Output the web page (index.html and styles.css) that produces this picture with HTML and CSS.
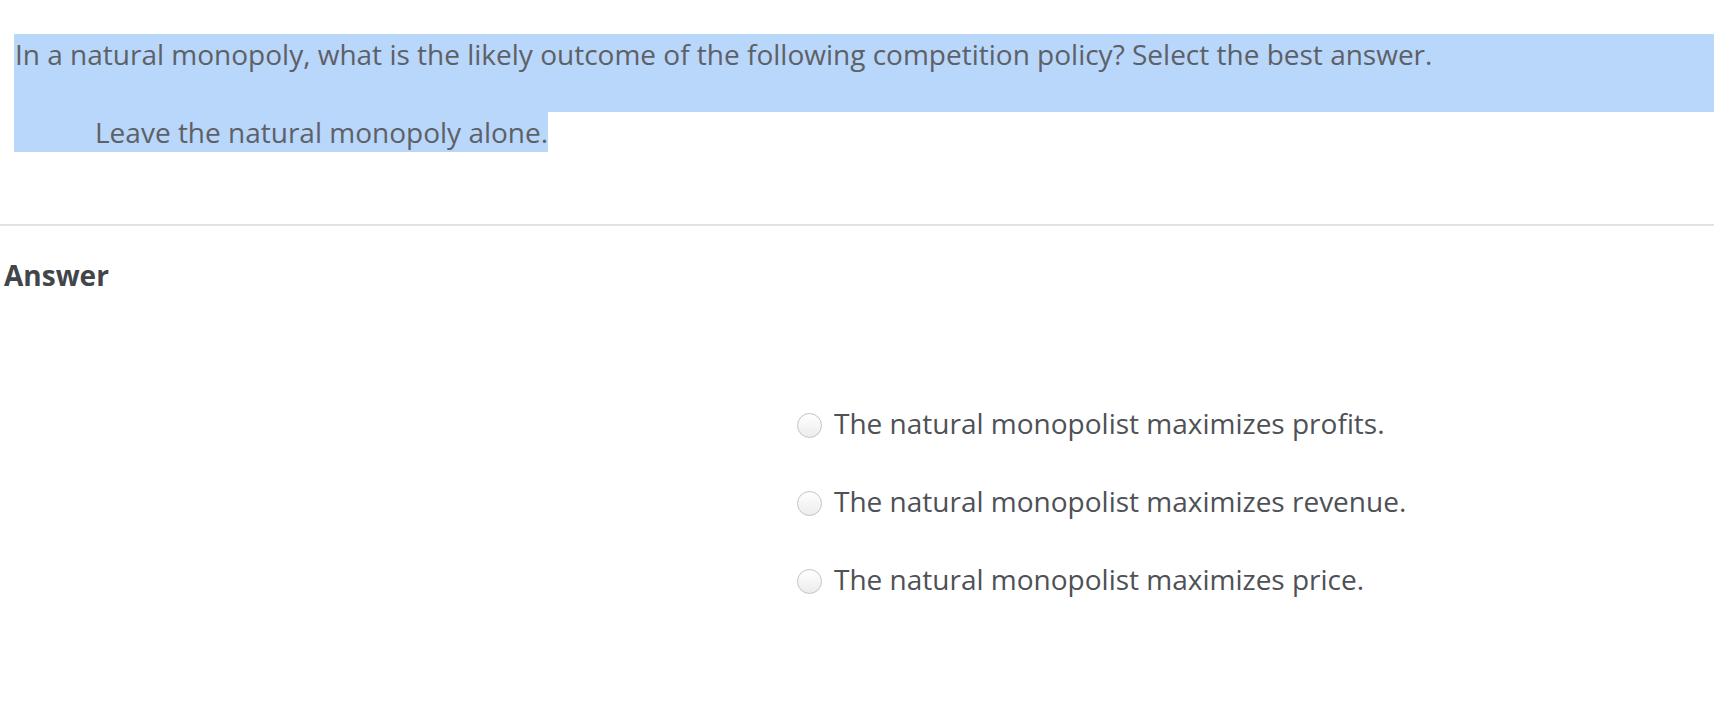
FILE: index.html
```html
<!DOCTYPE html>
<html lang="en">
<head>
<meta charset="utf-8">
<title>Question</title>
<link rel="stylesheet" href="styles.css">
</head>
<body>
<div class="page">
  <div class="question">
    <div class="q-line q-first"><span class="q-text">In a natural monopoly, what is the likely outcome of the following competition policy? Select the best answer.</span></div>
    <div class="q-blank"></div>
    <div class="q-line"><span class="q-policy">Leave the natural monopoly alone.</span></div>
  </div>
  <div class="divider"></div>
  <h2 class="answer-title">Answer</h2>
  <div class="options">
    <label class="option"><span class="radio"></span><span class="option-text">The natural monopolist maximizes profits.</span></label>
    <label class="option"><span class="radio"></span><span class="option-text">The natural monopolist maximizes revenue.</span></label>
    <label class="option"><span class="radio"></span><span class="option-text">The natural monopolist maximizes price.</span></label>
  </div>
</div>
</body>
</html>
```

FILE: styles.css
```css
html, body {
  margin: 0;
  padding: 0;
  background: #ffffff;
}
body {
  font-family: "Open Sans", "Noto Sans", "Liberation Sans", sans-serif;
  color: #5d6166;
}
.page {
  display: flex;
  flex-direction: column;
}
.question {
  padding-top: 34px;
  font-size: 28px;
  line-height: 40px;
}
.q-line {
  height: 40px;
  padding-left: 14px;
  display: flex;
}
.q-first {
  margin-left: 14px;
  padding-left: 1px;
  background: #b9d6fb;
}
.q-blank {
  height: 38px;
  margin-left: 14px;
  background: #b9d6fb;
}
.q-policy {
  display: inline-block;
  padding-left: 81px;
  padding-right: 0;
  background: #b9d6fb;
}
.divider {
  margin-top: 72px;
  height: 2px;
  background: #e2e2e2;
}
.answer-title {
  margin: 31px 0 0 4px;
  font-size: 28px;
  line-height: 36px;
  font-weight: 700;
  color: #42454a;
}
.options {
  display: flex;
  flex-direction: column;
  padding-left: 797px;
  padding-top: 110px;
  gap: 38px;
}
.option {
  display: flex;
  align-items: center;
  gap: 12px;
  height: 40px;
  font-size: 28px;
  color: #4e5156;
}
.radio {
  width: 23px;
  height: 23px;
  margin-top: 4px;
  border-radius: 50%;
  border: 1px solid #c4c4c4;
  background: linear-gradient(#ffffff, #ececec);
  box-shadow: inset 0 1px 1px rgba(255,255,255,0.8);
  flex: none;
}
```
